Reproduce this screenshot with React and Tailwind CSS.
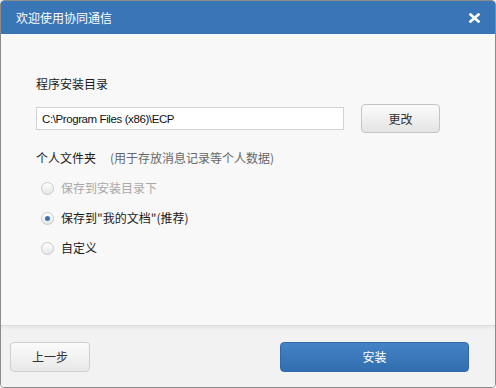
import React from "react";

const cjk = { fontFamily: '"Noto Sans CJK SC", "Liberation Sans", sans-serif' };

const Radio = ({ checked, disabled, label }) => (
  <label className="flex items-center h-[30px] gap-[7px]">
    <span className="w-[13px] h-[13px] ml-[5px] rounded-full border border-[#c9c9c9] bg-gradient-to-b from-white to-[#e6e6e6] flex items-center justify-center">
      {checked && <span className="w-[5px] h-[5px] rounded-full bg-[#3a73b3]" />}
    </span>
    <span className={disabled ? "text-[#a8a8a8]" : "text-[#1a1a1a]"}>{label}</span>
  </label>
);

export default function App() {
  return (
    <div
      className="w-[496px] h-[388px] flex flex-col border border-[#8c8c8c] rounded-[4px] overflow-hidden text-[12px] leading-[16px]"
      style={cjk}
    >
      {/* 标题栏 */}
      <div className="h-[33px] bg-[#3a75b5] flex items-center justify-between pl-[15px] pr-[15px] shrink-0">
        <span className="text-white text-[12px]">欢迎使用协同通信</span>
        <svg className="w-[11px] h-[10px]" viewBox="0 0 11 10">
          <path d="M1.5 1.5L9.5 8.5M9.5 1.5L1.5 8.5" stroke="white" strokeWidth="2.6" strokeLinecap="square" />
        </svg>
      </div>

      {/* 内容 */}
      <div className="flex-1 bg-[#f8f8f8] pl-[35px] pt-[42px]">
        <div className="text-[#1a1a1a]">程序安装目录</div>
        <div className="flex items-center mt-[12px] h-[29px]">
          <div
            className="w-[308px] h-[23px] border border-[#d2d2d2] bg-white flex items-center pl-[5px] text-[11.5px] tracking-[-0.4px] text-[#111]"
            style={{ fontFamily: '"Liberation Sans", Arial, sans-serif' }}
          >
            C:\Program Files (x86)\ECP
          </div>
          <button className="ml-[17px] w-[79px] h-[29px] rounded-[4px] border border-[#c4c4c4] bg-gradient-to-b from-[#fbfbfb] to-[#e4e4e4] text-[#333]">
            更改
          </button>
        </div>
        <div className="flex mt-[17px]">
          <span className="text-[#1a1a1a]">个人文件夹</span>
          <span className="ml-[14px] text-[#666]">(用于存放消息记录等个人数据)</span>
        </div>
        <div className="mt-[7px] flex flex-col">
          <Radio disabled label="保存到安装目录下" />
          <Radio checked label={'保存到"我的文档"(推荐)'} />
          <Radio label="自定义" />
        </div>
      </div>

      {/* 底部 */}
      <div className="h-[62px] shrink-0 bg-[#f2f2f2] border-t border-[#dcdcdc] shadow-[inset_0_3px_4px_-2px_rgba(0,0,0,0.08)] flex items-start pt-[16px] pl-[9px] pr-[26px] justify-between">
        <button className="w-[80px] h-[30px] rounded-[4px] border border-[#cfcfcf] bg-gradient-to-b from-[#fbfbfb] to-[#e8e8e8] text-[#333]">
          上一步
        </button>
        <button className="w-[189px] h-[30px] rounded-[4px] border border-[#3268a6] bg-gradient-to-b from-[#4383c6] to-[#326eaf] text-white">
          安装
        </button>
      </div>
    </div>
  );
}
